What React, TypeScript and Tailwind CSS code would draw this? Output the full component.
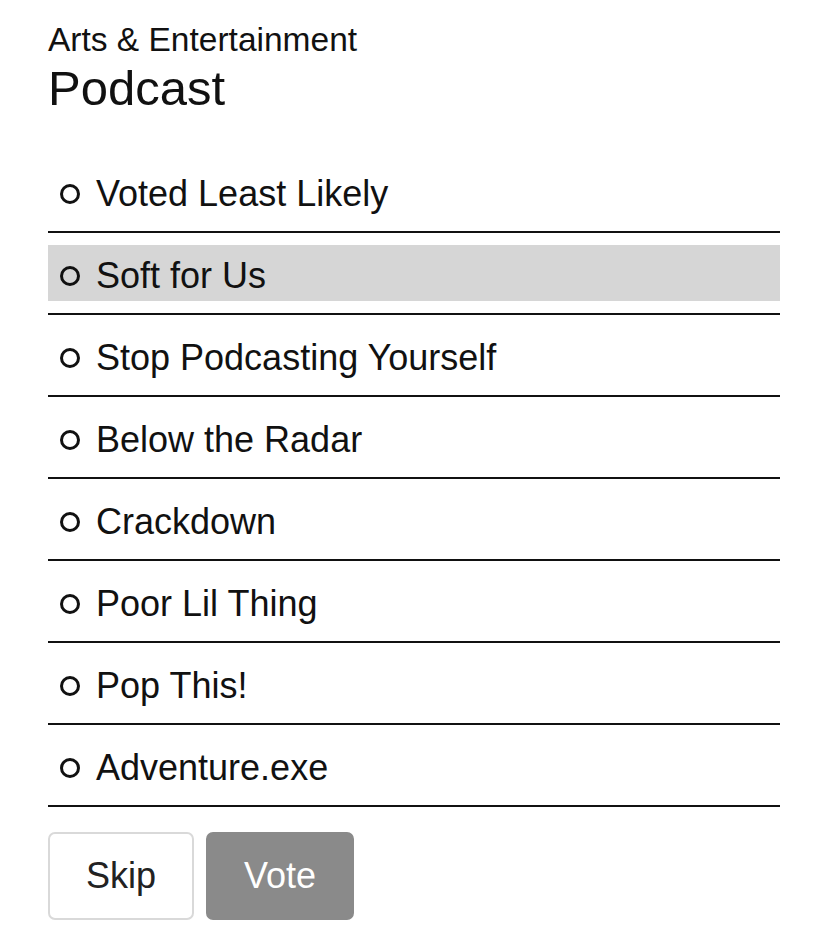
import { useState } from 'react'

const options = [
  'Voted Least Likely',
  'Soft for Us',
  'Stop Podcasting Yourself',
  'Below the Radar',
  'Crackdown',
  'Poor Lil Thing',
  'Pop This!',
  'Adventure.exe',
]

export default function App() {
  const [hovered] = useState(1)

  return (
    <div
      className="min-h-[932px] bg-white px-[48px] pt-[20px] text-[#111]"
      style={{ fontFamily: '"Liberation Sans", Arial, sans-serif' }}
    >
      <div className="text-[33.5px] leading-[40px]">Arts &amp; Entertainment</div>
      <h1 className="text-[49px] leading-[57px]">Podcast</h1>

      <ul className="mt-[34px]">
        {options.map((name, i) => (
          <li key={name} className="border-b-2 border-[#111] py-[12px]">
            <label
              className={`flex h-[56px] cursor-pointer items-center pl-[12px] text-[36px] ${
                i === hovered ? 'bg-[#d6d6d6]' : ''
              }`}
            >
              <span className="mr-[16px] mt-[5px] h-[20px] w-[20px] shrink-0 rounded-full border-[3px] border-[#111]" />
              <span className="mt-[5px] leading-[56px]">{name}</span>
            </label>
          </li>
        ))}
      </ul>

      <div className="mt-[25px] flex gap-[12px]">
        <button className="h-[88px] rounded-[7px] border-2 border-[#d9d9d9] bg-white px-[36px] text-[36px] text-[#222]">
          Skip
        </button>
        <button className="h-[88px] rounded-[7px] border-2 border-[#8a8a8a] bg-[#8a8a8a] px-[36px] text-[36px] text-white">
          Vote
        </button>
      </div>
    </div>
  )
}
